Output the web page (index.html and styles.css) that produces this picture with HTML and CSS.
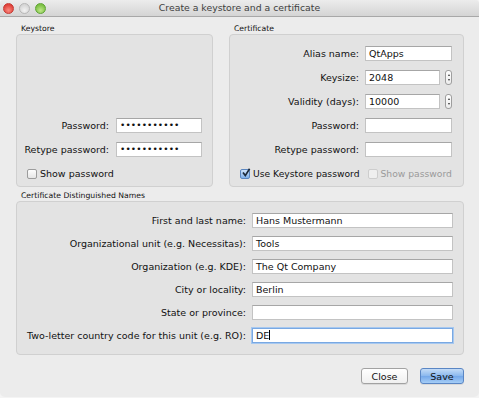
FILE: index.html
```html
<!DOCTYPE html>
<html lang="en">
<head>
    <meta charset="UTF-8">
    <title>Create a keystore and a certificate</title>
    <link rel="stylesheet" href="styles.css">
</head>
<body>

    <div class="window">

        <!-- Title bar -->
        <div class="titlebar">
            <div class="lights">
                <span class="light red"></span>
                <span class="light gray"></span>
                <span class="light green"></span>
            </div>
            <div class="title">Create a keystore and a certificate</div>
        </div>

        <div class="content">
            <div class="top-row">

                <!-- Keystore -->
                <section class="group keystore">
                    <div class="group-title">Keystore</div>
                    <div class="box">
                        <div class="form ks-form">
                            <label>Password:</label>
                            <div class="field dots">&bull;&bull;&bull;&bull;&bull;&bull;&bull;&bull;&bull;&bull;&bull;</div>
                            <label>Retype password:</label>
                            <div class="field dots">&bull;&bull;&bull;&bull;&bull;&bull;&bull;&bull;&bull;&bull;&bull;</div>
                            <div class="check-row">
                                <span class="check"></span><span>Show password</span>
                            </div>
                        </div>
                    </div>
                </section>

                <!-- Certificate -->
                <section class="group certificate">
                    <div class="group-title">Certificate</div>
                    <div class="box">
                        <div class="form cert-form">
                            <label>Alias name:</label>
                            <div class="field">QtApps</div>
                            <label>Keysize:</label>
                            <div class="spin-wrap">
                                <div class="field">2048</div>
                                <span class="spinner"><i class="up"></i><i class="down"></i></span>
                            </div>
                            <label>Validity (days):</label>
                            <div class="spin-wrap">
                                <div class="field">10000</div>
                                <span class="spinner"><i class="up"></i><i class="down"></i></span>
                            </div>
                            <label>Password:</label>
                            <div class="field"></div>
                            <label>Retype password:</label>
                            <div class="field"></div>
                            <div class="check-row cert-checks">
                                <span class="check checked">
                                    <svg viewBox="0 0 10 10" width="10" height="10"><path d="M2 4.6 L4.3 7.6 L8.6 0.8" fill="none" stroke="#1d2a3a" stroke-width="1.7"/></svg>
                                </span>
                                <span>Use Keystore password</span>
                                <span class="check disabled"></span><span class="muted">Show password</span>
                            </div>
                        </div>
                    </div>
                </section>
            </div>

            <!-- Distinguished names -->
            <section class="group dn">
                <div class="group-title">Certificate Distinguished Names</div>
                <div class="box">
                    <div class="form dn-form">
                        <label>First and last name:</label>
                        <div class="field">Hans Mustermann</div>
                        <label>Organizational unit (e.g. Necessitas):</label>
                        <div class="field">Tools</div>
                        <label>Organization (e.g. KDE):</label>
                        <div class="field">The Qt Company</div>
                        <label>City or locality:</label>
                        <div class="field">Berlin</div>
                        <label>State or province:</label>
                        <div class="field"></div>
                        <label>Two-letter country code for this unit (e.g. RO):</label>
                        <div class="field focused">DE<span class="caret"></span></div>
                    </div>
                </div>
            </section>

            <div class="buttons">
                <button class="btn">Close</button>
                <button class="btn default">Save</button>
            </div>
        </div>
    </div>

</body>
</html>
```

FILE: styles.css
```css
body {
    margin: 0;
    padding: 0;
    background: #f4f4f4;
    font-family: "DejaVu Sans", Verdana, sans-serif;
    font-size: 9.5px;
    color: #111;
}

.window {
    width: 479px;
    height: 397px;
    background: #ececec;
    border-radius: 4px 4px 5px 5px;
    overflow: hidden;
}

/* Title bar */
.titlebar {
    height: 16px;
    background: linear-gradient(#ececec, #d4d4d4);
    border-bottom: 1px solid #a8a8a8;
    display: flex;
    align-items: center;
    position: relative;
}

.lights {
    display: flex;
    gap: 5px;
    padding-left: 3px;
}

.light {
    width: 11px;
    height: 11px;
    border-radius: 50%;
    box-sizing: border-box;
}

.light.red {
    background: radial-gradient(circle at 50% 70%, #fb8a80, #e0423a 70%);
    border: 1px solid #c33a34;
}

.light.gray {
    background: radial-gradient(circle at 50% 70%, #f2f2f2, #d6d6d6 70%);
    border: 1px solid #b6b6b6;
}

.light.green {
    background: radial-gradient(circle at 50% 70%, #bfe78a, #7cc043 70%);
    border: 1px solid #5fa235;
}

.title {
    position: absolute;
    left: 0;
    right: 0;
    text-align: center;
    font-size: 9.3px;
    color: #404040;
    top: 2px;
}

/* Content */
.content {
    padding: 7px 15px 0 16px;
}

.top-row {
    display: flex;
    gap: 16px;
}

.group-title {
    font-size: 7.7px;
    height: 10px;
    line-height: 10px;
    padding-left: 5px;
    color: #111;
}

.box {
    background: #e3e3e3;
    border: 1px solid #d0d0d0;
    border-radius: 4px;
    box-sizing: border-box;
}

.keystore .box {
    width: 197px;
    height: 153px;
    display: flex;
    flex-direction: column;
    justify-content: flex-end;
    padding-bottom: 5px;
}

.certificate .box {
    width: 235px;
    height: 153px;
    padding-top: 11px;
}

.dn {
    margin-top: 4px;
}

.dn .box {
    width: 448px;
    height: 154px;
    padding-top: 11px;
}

/* Forms */
.form {
    display: grid;
    row-gap: 9px;
    column-gap: 6px;
    align-items: center;
}

.form label {
    text-align: right;
    white-space: nowrap;
}

.ks-form {
    grid-template-columns: 92px 86px;
    column-gap: 7px;
}

.cert-form {
    grid-template-columns: 129px 87px;
}

.dn-form {
    grid-template-columns: 229px 201px;
    row-gap: 8px;
}

.field {
    height: 15px;
    box-sizing: border-box;
    background: #fff;
    border: 1px solid #c3c3c3;
    border-top-color: #a6a6a6;
    padding-left: 3px;
    line-height: 13px;
    font-size: 9.5px;
    white-space: nowrap;
    overflow: hidden;
}

.field.dots {
    font-size: 9px;
    letter-spacing: 0.1px;
    line-height: 12px;
}

.field.focused {
    border-color: #79a8e2;
    box-shadow: 0 0 0 1px #a6c8f0;
}

.caret {
    display: inline-block;
    width: 1px;
    height: 10px;
    background: #000;
    vertical-align: -1px;
}

.spin-wrap {
    display: flex;
    align-items: center;
    gap: 5px;
}

.spin-wrap .field {
    width: 75px;
}

.spinner {
    width: 7px;
    height: 15px;
    box-sizing: border-box;
    border: 1px solid #9e9e9e;
    border-radius: 3px;
    background: linear-gradient(#ffffff, #ececec);
    display: flex;
    flex-direction: column;
    align-items: center;
    justify-content: center;
    gap: 3px;
}

.spinner i {
    width: 0;
    height: 0;
    border-left: 1.5px solid transparent;
    border-right: 1.5px solid transparent;
}

.spinner .up {
    border-bottom: 2px solid #333;
}

.spinner .down {
    border-top: 2px solid #333;
}

/* Checkboxes */
.check-row {
    grid-column: 1 / -1;
    display: flex;
    align-items: center;
    gap: 3px;
    height: 15px;
    padding-left: 10px;
    white-space: nowrap;
}

.cert-checks {
    font-size: 9.2px;
}

.check {
    flex: none;
    width: 10px;
    height: 10px;
    box-sizing: border-box;
    border: 1px solid #9c9c9c;
    border-radius: 2px;
    background: linear-gradient(#fdfdfd, #e6e6e6);
    position: relative;
}

.check.checked {
    background: linear-gradient(#cfe3fa, #7fb1eb);
    border-color: #5b86bf;
}

.check.checked svg {
    position: absolute;
    left: 0;
    top: -2px;
}

.check.disabled {
    border-color: #cdcdcd;
    background: #efefef;
    margin-left: 5px;
}

.muted {
    color: #9a9a9a;
}

/* Buttons */
.buttons {
    display: flex;
    justify-content: flex-end;
    gap: 12px;
    margin-top: 13px;
}

.btn {
    font-family: "DejaVu Sans", Verdana, sans-serif;
    font-size: 9.5px;
    height: 16px;
    padding: 0;
    border: 1px solid #a2a2a2;
    border-radius: 3px;
    background: linear-gradient(#ffffff, #f0f0f0);
    color: #111;
    width: 47px;
    box-shadow: 0 1px 0 rgba(0, 0, 0, 0.08);
}

.btn.default {
    width: 44px;
    border-color: #5a86c4;
    background: linear-gradient(#c4dcf7, #8ab8ee 50%, #74a8ea 51%, #a5cdf6);
}
```
